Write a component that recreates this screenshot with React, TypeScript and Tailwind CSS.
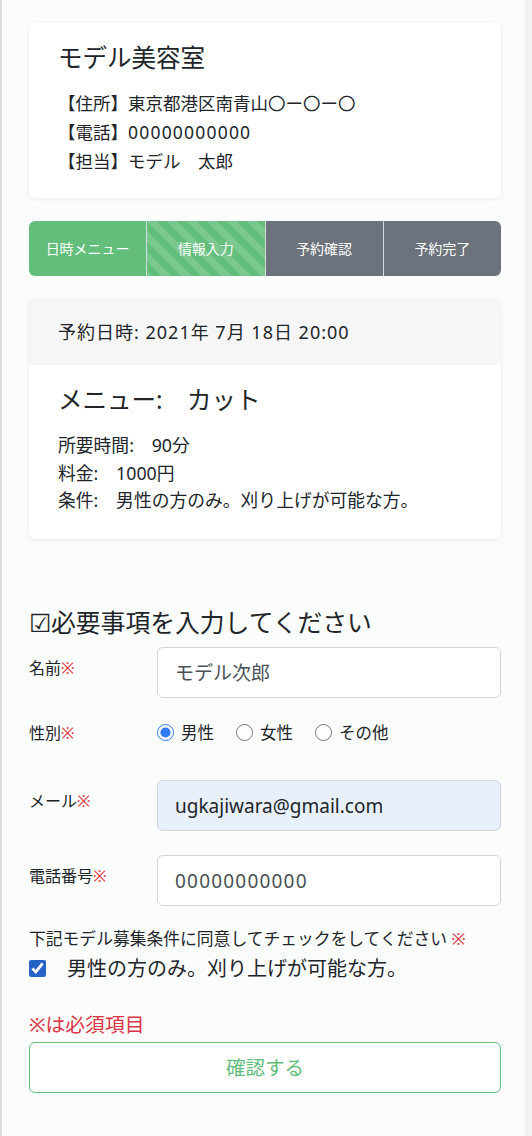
import React from 'react';

const steps = [
  { label: '日時メニュー', state: 'done' },
  { label: '情報入力', state: 'current' },
  { label: '予約確認', state: 'todo' },
  { label: '予約完了', state: 'todo' },
];

function Req() {
  return <span className="text-[#dc3545]">※</span>;
}

export default function App() {
  const [gender, setGender] = React.useState('male');
  const [agree, setAgree] = React.useState(true);

  return (
    <div
      className="flex min-h-[1136px] w-[532px] bg-[#f1f2f3] text-[#212529]"
      style={{ fontFamily: '"Noto Sans", "Noto Sans CJK JP", sans-serif' }}
    >
      <div className="w-[525px] border-l-2 border-[#dcdcdc] bg-[#fbfcfc] pl-[27px] pr-[24px] pt-[23px]">
        {/* shop info */}
        <div className="rounded-md bg-white px-[29px] pt-[17px] pb-[22px] shadow-[0_1px_4px_rgba(0,0,0,0.08)]">
          <h1 className="text-[24.5px] leading-[36px]">モデル美容室</h1>
          <div className="mt-[13px] text-[17.5px] leading-[29px]">
            <p>【住所】東京都港区南青山〇ー〇ー〇</p>
            <p>【電話】<span className="tracking-[1.2px]">00000000000</span></p>
            <p>【担当】モデル　太郎</p>
          </div>
        </div>

        {/* progress */}
        <div className="mt-[23px] flex h-[55px] overflow-hidden rounded-md text-[14px] text-white">
          {steps.map((s, i) => (
            <div
              key={s.label}
              className={
                'flex flex-1 items-center justify-center ' +
                (i > 0 ? 'border-l border-[#d8dbde] ' : '') +
                (s.state === 'todo' ? 'bg-[#6c737c]' : 'bg-[#63bd7b]')
              }
              style={
                s.state === 'current'
                  ? {
                      backgroundImage:
                        'linear-gradient(45deg, rgba(255,255,255,0.15) 25%, transparent 25%, transparent 50%, rgba(255,255,255,0.15) 50%, rgba(255,255,255,0.15) 75%, transparent 75%, transparent)',
                      backgroundSize: '20px 20px',
                    }
                  : undefined
              }
            >
              {s.label}
            </div>
          ))}
        </div>

        {/* reservation */}
        <div className="mt-[23px] overflow-hidden rounded-md bg-white shadow-[0_1px_4px_rgba(0,0,0,0.08)]">
          <div className="flex h-[66px] items-center bg-[#f6f6f6] px-[29px] text-[18px] tracking-[1px]">
            予約日時: 2021年 7月 18日 20:00
          </div>
          <div className="px-[29px] pt-[17px] pb-[24px]">
            <h2 className="text-[24.5px] leading-[36px]">メニュー:　カット</h2>
            <div className="mt-[14px] text-[17.8px] leading-[27.5px]">
              <p>所要時間:　90分</p>
              <p>料金:　1000円</p>
              <p>条件:　男性の方のみ。刈り上げが可能な方。</p>
            </div>
          </div>
        </div>

        {/* form */}
        <h3 className="mt-[65px] text-[24.8px] leading-[36px]">☑必要事項を入力してください</h3>

        <div className="mt-[7px] flex items-start">
          <label className="w-[128px] pt-[9px] text-[16px] leading-[24px]">名前<Req /></label>
          <input
            defaultValue="モデル次郎"
            className="h-[51px] flex-1 rounded-md border border-[#d2d6da] bg-white px-[17px] text-[19px] text-[#495057]"
          />
        </div>

        <div className="mt-[23px] flex items-center">
          <label className="w-[128px] text-[16px] leading-[24px]">性別<Req /></label>
          <div className="flex items-center gap-[22px] text-[16.5px]">
            {[
              ['male', '男性'],
              ['female', '女性'],
              ['other', 'その他'],
            ].map(([v, t]) => (
              <label key={v} className="flex items-center gap-[7px]">
                <input
                  type="radio"
                  name="gender"
                  checked={gender === v}
                  onChange={() => setGender(v)}
                  className="m-0 h-[17px] w-[17px] accent-[#2f7cf6]"
                />
                {t}
              </label>
            ))}
          </div>
        </div>

        <div className="mt-[35px] flex items-start">
          <label className="w-[128px] pt-[9px] text-[16px] leading-[24px]">メール<Req /></label>
          <input
            defaultValue="ugkajiwara@gmail.com"
            className="h-[51px] flex-1 rounded-md border border-[#d2d6da] bg-[#e8f0fe] px-[17px] text-[19px] text-[#212529]"
          />
        </div>

        <div className="mt-[24px] flex items-start">
          <label className="w-[128px] pt-[9px] text-[16px] leading-[24px]">電話番号<Req /></label>
          <input
            defaultValue="00000000000"
            className="h-[51px] flex-1 rounded-md border border-[#d2d6da] bg-white px-[17px] text-[19px] tracking-[1.2px] text-[#495057]"
          />
        </div>

        <p className="mt-[21px] text-[16.8px] leading-[24px]">
          下記モデル募集条件に同意してチェックをしてください <Req />
        </p>
        <label className="mt-[4px] flex items-center text-[20px] leading-[27px]">
          <input
            type="checkbox"
            checked={agree}
            onChange={() => setAgree(!agree)}
            className="m-0 h-[17px] w-[17px] accent-[#2762c9]"
          />
          <span className="ml-[21px]">男性の方のみ。刈り上げが可能な方。</span>
        </label>

        <p className="mt-[29px] text-[19.8px] leading-[27px] text-[#dc3545]">※は必須項目</p>
        <button className="mt-[4px] h-[51px] w-full rounded-md border border-[#63bd7b] bg-white text-[19.5px] text-[#63bd7b]">
          確認する
        </button>
      </div>
    </div>
  );
}
